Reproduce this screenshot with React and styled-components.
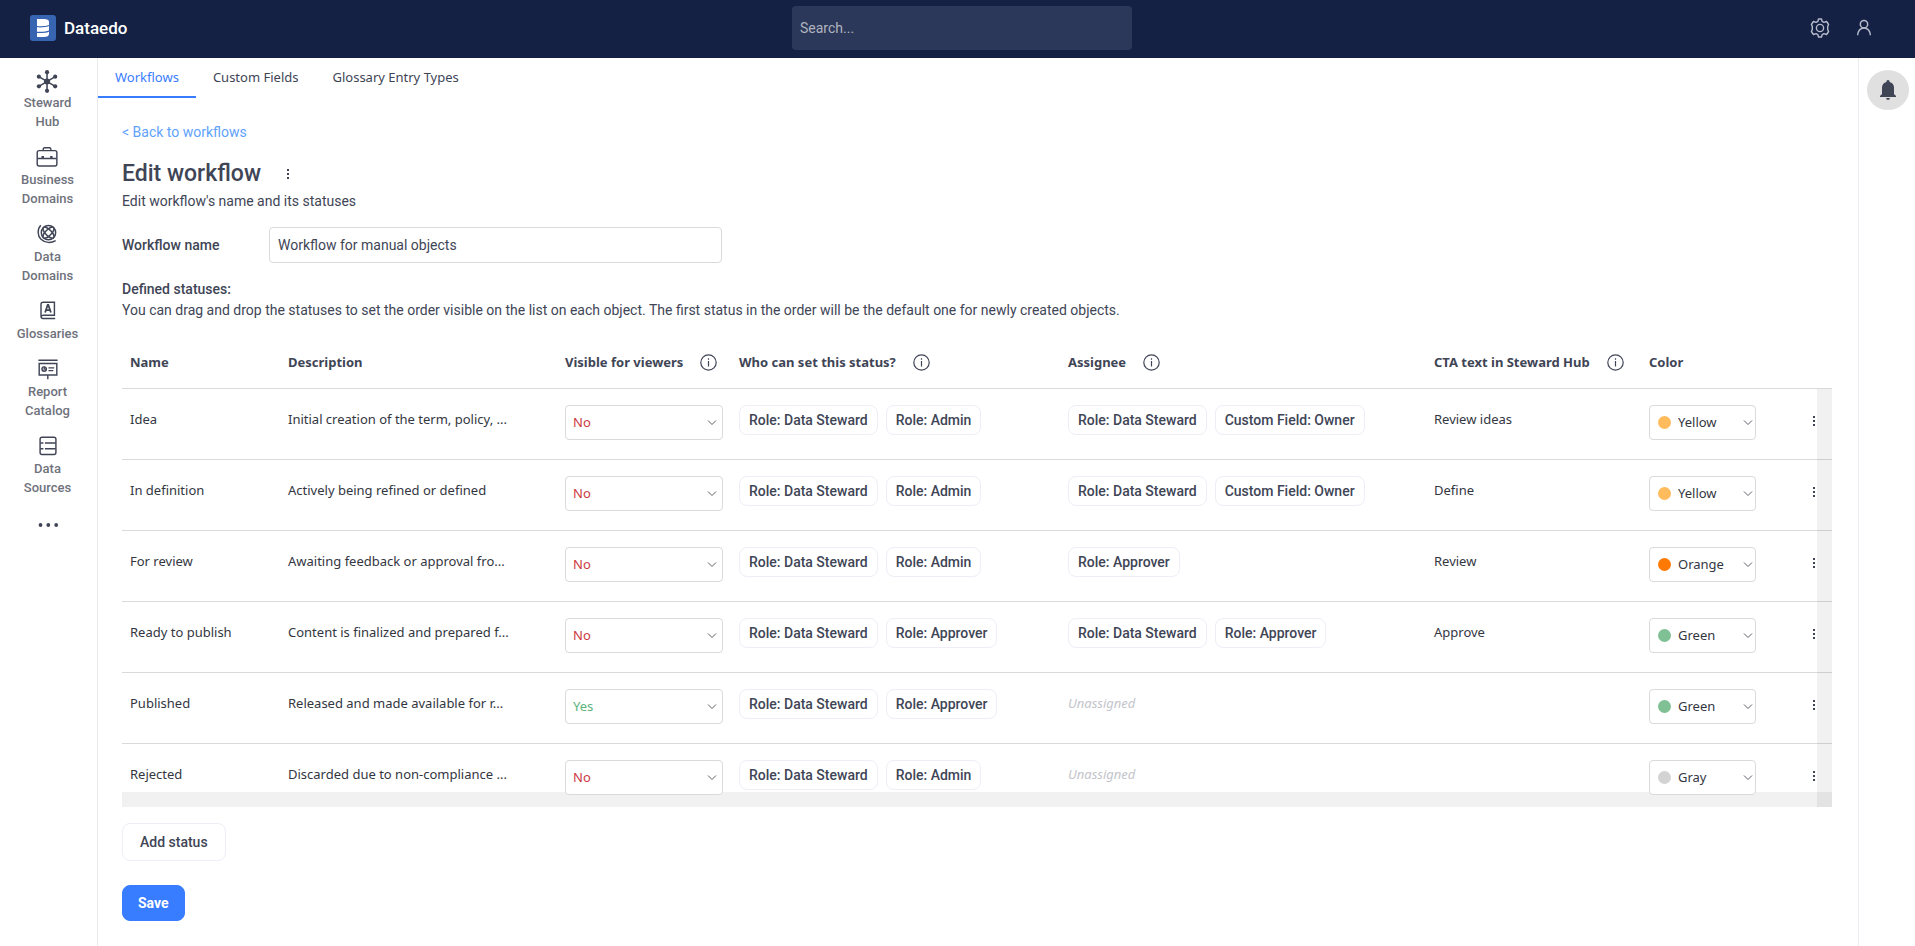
import { useState } from "react";
import styled, { createGlobalStyle, ThemeProvider } from "styled-components";

const theme = {
  navy: "#142144",
  search: "#2c385a",
  primary: "#387dff",
  link: "#60a2fb",
  text: "#404556",
  body: "#33363f",
  muted: "#6f727c",
  line: "#dadada",
  pale: "#eeeef7",
  red: "#cb3a3f",
  green: "#5db37c",
  ui: `Roboto, "Liberation Sans", sans-serif`,
  grid: `"Noto Sans", "Open Sans", sans-serif`,
};

const GlobalStyle = createGlobalStyle`
  * {
    box-sizing: border-box;
  }

  body {
    margin: 0;
    background: #fff;
    color: ${theme.text};
    font-family: ${theme.ui};
    font-size: 14px;
  }

  button, input, select {
    font: inherit;
    color: inherit;
  }

  h1, p, ul {
    margin: 0;
    padding: 0;
  }

  a {
    text-decoration: none;
  }
`;

const Page = styled.div`
  display: flex;
  flex-direction: column;
  min-height: 100vh;
`;

const Header = styled.header`
  display: grid;
  grid-template-columns: 1fr 340px 1fr;
  align-items: center;
  height: 58px;
  padding: 0 21px 2px 30px;
  background: ${(p) => p.theme.navy};
`;

const Logo = styled.a`
  display: flex;
  align-items: center;
  gap: 8px;
  color: #fff;
  font-size: 17px;
  font-weight: 500;
`;

const SearchInput = styled.input`
  width: 100%;
  height: 44px;
  padding: 0 8px;
  border: 0;
  border-radius: 4px;
  background: ${(p) => p.theme.search};
  color: #fff;

  &::placeholder {
    color: #b0b4bf;
    opacity: 1;
  }
`;

const HeaderActions = styled.div`
  display: flex;
  justify-content: flex-end;
  padding-right: 8px;
`;

const IconButton = styled.button`
  display: flex;
  align-items: center;
  justify-content: center;
  width: ${(p) => p.$width || 44}px;
  height: ${(p) => p.$height || 44}px;
  padding: 0;
  border: 0;
  border-radius: 50%;
  background: ${(p) => p.$background || "transparent"};
  color: ${(p) => p.$color || p.theme.text};
  cursor: pointer;
`;

const Body = styled.div`
  display: flex;
  flex: 1;
`;

const Sidebar = styled.nav`
  flex: 0 0 98px;
  padding: 12px 2px 0 0;
  border-right: 1px solid #ebebeb;

  ul {
    display: flex;
    flex-direction: column;
    gap: 16px;
    list-style: none;
  }
`;

const SideLink = styled.a`
  display: flex;
  flex-direction: column;
  align-items: center;
  padding: 0 12px;
  color: ${(p) => p.theme.muted};
  font-size: 13px;
  font-weight: 500;
  line-height: 19px;
  text-align: center;

  svg {
    height: 23px;
    color: ${(p) => p.theme.text};
  }
`;

const Rail = styled.aside`
  display: flex;
  justify-content: center;
  align-items: flex-start;
  flex: 0 0 57px;
  padding: 12px 0 0 2px;
  border-left: 1px solid #ebecf2;
`;

const Main = styled.main`
  flex: 1;
  min-width: 0;
`;

const Tabs = styled.nav`
  display: flex;
  height: 40px;
`;

const Tab = styled.a`
  padding: 0 17px;
  border-bottom: 2px solid ${(p) => (p.$active ? p.theme.primary : "transparent")};
  color: ${(p) => (p.$active ? p.theme.primary : p.theme.text)};
  font-family: ${(p) => p.theme.grid};
  font-size: 13px;
  line-height: 38px;
`;

const Content = styled.div`
  padding: 24px 26px 24px 24px;
`;

const BackLink = styled.a`
  display: block;
  color: ${(p) => p.theme.link};
  line-height: 20px;
`;

const TitleRow = styled.div`
  display: flex;
  align-items: center;
  gap: 15px;
  margin-top: 18px;

  h1 {
    font-size: 23px;
    font-weight: 500;
    line-height: 28px;
  }
`;

const Subtitle = styled.p`
  margin-top: 3px;
  line-height: 20px;
`;

const Field = styled.div`
  display: flex;
  align-items: center;
  margin-top: 16px;

  label {
    flex: 0 0 147px;
    font-weight: 500;
  }

  input {
    flex: 0 1 453px;
    height: 36px;
    padding: 0 8px;
    border: 1px solid ${(p) => p.theme.line};
    border-radius: 4px;
    background: #fff;
  }
`;

const Hint = styled.div`
  margin-top: 16px;
  line-height: 21px;

  strong {
    font-weight: 500;
  }
`;

const TableFrame = styled.div`
  position: relative;
  margin-top: 15px;
`;

const Track = styled.span`
  position: absolute;
  right: 0;
  bottom: 0;
  ${(p) => (p.$vertical ? "top: 53px; width: 15px;" : "left: 0; height: 15px;")}
  background: rgba(0, 0, 0, 0.055);
  pointer-events: none;
`;

const StatusTable = styled.table`
  width: 100%;
  table-layout: fixed;
  border-spacing: 0;
  font-family: ${(p) => p.theme.grid};
  font-size: 13px;
  color: ${(p) => p.theme.body};

  th {
    height: 53px;
    padding: 0 8px;
    border-bottom: 1px solid ${(p) => p.theme.line};
    color: ${(p) => p.theme.text};
    font-weight: 700;
    text-align: left;
    white-space: nowrap;
  }

  td {
    height: 71px;
    padding: 16px 8px 18px;
    border-bottom: 1px solid ${(p) => p.theme.line};
    line-height: 29px;
    vertical-align: top;
    white-space: nowrap;
  }

  tbody tr:last-child td {
    height: auto;
    padding-bottom: 12px;
    border-bottom: 0;
  }
`;

const HeadLabel = styled.span`
  display: flex;
  align-items: center;
  gap: 17px;
`;

const Chips = styled.div`
  display: flex;
  gap: 8px;
`;

const Chip = styled.span`
  height: 30px;
  padding: 0 9px;
  border: 1px solid ${(p) => p.theme.pale};
  border-radius: 8px;
  color: ${(p) => p.theme.text};
  font-family: ${(p) => p.theme.ui};
  font-size: 14px;
  font-weight: 500;
  line-height: 28px;
`;

const Unassigned = styled.em`
  color: #c3c5cb;
`;

const SelectBox = styled.div`
  position: relative;
  z-index: 1;
  height: 35px;

  select {
    display: block;
    width: 100%;
    height: 35px;
    padding: 0 20px 0 ${(p) => (p.$dot ? 28 : 7)}px;
    border: 1px solid ${(p) => p.theme.line};
    border-radius: 4px;
    background: #fff;
    color: ${(p) => p.$color || p.theme.body};
    appearance: none;
  }

  svg {
    position: absolute;
    top: 14px;
    right: ${(p) => (p.$dot ? 3 : 6)}px;
    pointer-events: none;
  }
`;

const Dot = styled.span`
  position: absolute;
  top: 11px;
  left: 9px;
  width: 13px;
  height: 13px;
  border-radius: 50%;
  background: ${(p) => p.$color};
`;

const RowMenu = styled.div`
  display: flex;
  justify-content: flex-end;
  padding-right: 2px;
`;

const Button = styled.button`
  display: block;
  height: ${(p) => (p.$primary ? 36 : 38)}px;
  margin-top: ${(p) => (p.$primary ? 24 : 16)}px;
  padding: 0 ${(p) => (p.$primary ? 15 : 17)}px;
  border: 1px solid ${(p) => (p.$primary ? p.theme.primary : p.theme.pale)};
  border-radius: 8px;
  background: ${(p) => (p.$primary ? p.theme.primary : "#fff")};
  color: ${(p) => (p.$primary ? "#fff" : p.theme.text)};
  font-weight: ${(p) => (p.$primary ? 700 : 500)};
  cursor: pointer;
`;

function Stroke({ size = 24, width = 1.5, children }) {
  return (
    <svg
      width={size}
      height={size}
      viewBox={`0 0 ${size} ${size}`}
      fill="none"
      stroke="currentColor"
      strokeWidth={width}
      aria-hidden="true"
    >
      {children}
    </svg>
  );
}

function LogoMark() {
  return (
    <svg width="26" height="26" viewBox="0 0 26 26" aria-hidden="true">
      <rect width="26" height="26" rx="3" fill="#3765b2" />
      <g fill="#fff">
        <path d="M7 4h7c3 0 5 1 5 2.500v3.500c-3 1.200-7 1.400-12 1z" />
        <path d="M7 12.300c5 .3 9 0 12-1.300v4.500c-3 1.200-7 1.500-12 1.200z" />
        <path d="M7 18c5 .3 9 0 12-1.300v2.300c0 2-2 3-5 3H7z" />
      </g>
    </svg>
  );
}

function GearIcon() {
  return (
    <Stroke size={22} width={1.4}>
      <path
        d="M9.500 2h3l.6 2.300 1.900 1.100 2.600-.9 2 3-.9 1.900v3.200l.9 1.900-2 3-2.600-.9-1.900 1.100-.6 2.300h-3l-.6-2.300L7 16.600l-2.600.9-2-3 .9-1.900V9.400l-.9-1.900 2-3 2.600.9 1.900-1.100z"
        strokeLinejoin="round"
      />
      <circle cx="11" cy="11" r="3.600" />
    </Stroke>
  );
}

function UserIcon() {
  return (
    <Stroke size={20} width={1.5}>
      <circle cx="10" cy="6.200" r="3.700" />
      <path d="M3.700 17.300c0-4.200 2.600-7.300 6.300-7.300s6.300 3.100 6.300 7.300" />
    </Stroke>
  );
}

function BellIcon() {
  return (
    <svg width="16" height="20" viewBox="0 0 16 20" fill="currentColor" aria-hidden="true">
      <path d="M6.500 2V.8Q8-.6 9.500.8V2c3 .7 4.500 3 4.500 5.500V14l2 2v1H0v-1l2-2V7.500C2 5 3.500 2.700 6.500 2z" />
      <path d="M6 18h4q-.5 2-2 2t-2-2z" />
    </svg>
  );
}

function KebabIcon() {
  return (
    <svg width="4" height="12" viewBox="0 0 4 12" fill="currentColor" aria-hidden="true">
      <rect x="1" y="1" width="2" height="2" />
      <rect x="1" y="5" width="2" height="2" />
      <rect x="1" y="9" width="2" height="2" />
    </svg>
  );
}

function ChevronIcon() {
  return (
    <svg width="10" height="8" viewBox="0 0 10 8" fill="none" stroke="#5c5f66" aria-hidden="true">
      <path d="M1 1.500l4 4 4-4" />
    </svg>
  );
}

function InfoIcon() {
  return (
    <Stroke size={17} width={1.2}>
      <circle cx="8.500" cy="8.500" r="7.700" />
      <path d="M8.500 7v5.500M8.500 4.300v1.500" />
    </Stroke>
  );
}

function StewardIcon() {
  return (
    <Stroke width={1.6}>
      <path d="M11 3v18M2.500 7l17 10M19.500 7l-17 10" />
      <g fill="currentColor" stroke="none">
        <circle cx="11" cy="12" r="3.200" />
        <circle cx="11" cy="2.300" r="2.200" />
        <circle cx="11" cy="21.700" r="2.200" />
        <circle cx="2.500" cy="7" r="2.200" />
        <circle cx="19.500" cy="7" r="2.200" />
        <circle cx="2.500" cy="17" r="2.200" />
        <circle cx="19.500" cy="17" r="2.200" />
      </g>
    </Stroke>
  );
}

function BusinessIcon() {
  return (
    <Stroke>
      <rect x="0.750" y="3.750" width="20.500" height="16" rx="2" />
      <path d="M7 3.500V2.500Q7 .8 8.500 .8h5Q15 .8 15 2.500v1M1 12h20" />
      <path d="M6.500 9.500v2M15.500 9.500v2" strokeWidth="2.500" />
    </Stroke>
  );
}

function DomainsIcon() {
  return (
    <Stroke width={1.5}>
      <circle cx="12.500" cy="9" r="7.500" />
      <g transform="rotate(45 12.500 9)">
        <ellipse cx="12.500" cy="9" rx="7.500" ry="3" />
        <ellipse cx="12.500" cy="9" rx="3" ry="7.500" />
      </g>
      <path d="M4.500 1.200C.5 5.500 1 12.200 4.700 16c4.200 4 10.600 4.100 15.300 1.300" />
    </Stroke>
  );
}

function GlossaryIcon() {
  return (
    <Stroke>
      <path d="M19.500 18.200H6.500Q4.700 18.200 4.700 16V3.500Q4.700 1.300 7 1.300h11.700v13.500H7Q4.900 14.900 4.800 16.500" />
      <path d="M9 12l2.700-8h.6L15 12M10 9.500h4" strokeWidth="1.900" />
    </Stroke>
  );
}

function ReportIcon() {
  return (
    <Stroke>
      <path d="M2 1.300h20M11.800 17v4M2.800 4.700h18.400v12H2.800z" />
      <circle cx="8" cy="10.500" r="2.300" />
      <path d="M8 8v2.500h2.500M12.500 9.200h6M12.500 12.200h5" strokeWidth="1.400" />
    </Stroke>
  );
}

function SourcesIcon() {
  return (
    <Stroke>
      <rect x="3.750" y="1.250" width="16.500" height="18" rx="2" />
      <path d="M4 7.300h3.200M8.800 7.300H20M4 13.300h3.200M8.800 13.300H20" />
    </Stroke>
  );
}

function MoreIcon() {
  return (
    <svg width="24" height="8" viewBox="0 0 24 8" fill="currentColor" aria-hidden="true">
      <circle cx="4.500" cy="4" r="1.900" />
      <circle cx="12.300" cy="4" r="1.900" />
      <circle cx="20.200" cy="4" r="1.900" />
    </svg>
  );
}

const MoreItem = styled.li`
  display: flex;
  justify-content: center;
  padding-top: 8px;
`;

const sideItems = [
  { label: "Steward Hub", Icon: StewardIcon },
  { label: "Business Domains", Icon: BusinessIcon },
  { label: "Data Domains", Icon: DomainsIcon },
  { label: "Glossaries", Icon: GlossaryIcon },
  { label: "Report Catalog", Icon: ReportIcon },
  { label: "Data Sources", Icon: SourcesIcon },
];

const tabs = ["Workflows", "Custom Fields", "Glossary Entry Types"];

const columns = [
  { label: "Name", width: 158 },
  { label: "Description", width: 277 },
  { label: "Visible for viewers", width: 174, info: true },
  { label: "Who can set this status?", width: 329, info: true },
  { label: "Assignee", width: 366, info: true },
  { label: "CTA text in Steward Hub", width: 215, info: true },
  { label: "Color", width: 123 },
  { label: "", width: 68 },
];

const colors = {
  Yellow: "#ffbb5c",
  Orange: "#ff7a05",
  Green: "#7fc194",
  Gray: "#d3d3d3",
};

const initialStatuses = [
  {
    name: "Idea",
    description: "Initial creation of the term, policy, ...",
    visible: "No",
    setters: ["Role: Data Steward", "Role: Admin"],
    assignees: ["Role: Data Steward", "Custom Field: Owner"],
    cta: "Review ideas",
    color: "Yellow",
  },
  {
    name: "In definition",
    description: "Actively being refined or defined",
    visible: "No",
    setters: ["Role: Data Steward", "Role: Admin"],
    assignees: ["Role: Data Steward", "Custom Field: Owner"],
    cta: "Define",
    color: "Yellow",
  },
  {
    name: "For review",
    description: "Awaiting feedback or approval fro...",
    visible: "No",
    setters: ["Role: Data Steward", "Role: Admin"],
    assignees: ["Role: Approver"],
    cta: "Review",
    color: "Orange",
  },
  {
    name: "Ready to publish",
    description: "Content is finalized and prepared f...",
    visible: "No",
    setters: ["Role: Data Steward", "Role: Approver"],
    assignees: ["Role: Data Steward", "Role: Approver"],
    cta: "Approve",
    color: "Green",
  },
  {
    name: "Published",
    description: "Released and made available for r...",
    visible: "Yes",
    setters: ["Role: Data Steward", "Role: Approver"],
    assignees: [],
    cta: "",
    color: "Green",
  },
  {
    name: "Rejected",
    description: "Discarded due to non-compliance ...",
    visible: "No",
    setters: ["Role: Data Steward", "Role: Admin"],
    assignees: [],
    cta: "",
    color: "Gray",
  },
];

function ChipList({ items }) {
  return (
    <Chips>
      {items.map((item) => (
        <Chip key={item}>{item}</Chip>
      ))}
    </Chips>
  );
}

function StatusRow({ status, onChange }) {
  return (
    <tr>
      <td>{status.name}</td>
      <td>{status.description}</td>
      <td>
        <SelectBox $color={status.visible === "Yes" ? theme.green : theme.red}>
          <select
            aria-label={`${status.name} visible for viewers`}
            value={status.visible}
            onChange={(e) => onChange({ visible: e.target.value })}
          >
            <option>No</option>
            <option>Yes</option>
          </select>
          <ChevronIcon />
        </SelectBox>
      </td>
      <td>
        <ChipList items={status.setters} />
      </td>
      <td>
        {status.assignees.length ? (
          <ChipList items={status.assignees} />
        ) : (
          <Unassigned>Unassigned</Unassigned>
        )}
      </td>
      <td>{status.cta}</td>
      <td>
        <SelectBox $dot>
          <select
            aria-label={`${status.name} color`}
            value={status.color}
            onChange={(e) => onChange({ color: e.target.value })}
          >
            {Object.keys(colors).map((color) => (
              <option key={color}>{color}</option>
            ))}
          </select>
          <Dot $color={colors[status.color]} />
          <ChevronIcon />
        </SelectBox>
      </td>
      <td>
        <RowMenu>
          <IconButton $width={16} $height={32} aria-label={`${status.name} menu`}>
            <KebabIcon />
          </IconButton>
        </RowMenu>
      </td>
    </tr>
  );
}

export default function App() {
  const [activeTab, setActiveTab] = useState("Workflows");
  const [name, setName] = useState("Workflow for manual objects");
  const [statuses, setStatuses] = useState(initialStatuses);

  const updateStatus = (index, patch) => {
    setStatuses(statuses.map((s, i) => (i === index ? { ...s, ...patch } : s)));
  };

  return (
    <ThemeProvider theme={theme}>
      <GlobalStyle />
      <Page>
        <Header>
          <Logo href="#home">
            <LogoMark />
            Dataedo
          </Logo>
          <SearchInput type="text" placeholder="Search..." aria-label="Search" />
          <HeaderActions>
            <IconButton $color="#b4bac8" aria-label="Settings">
              <GearIcon />
            </IconButton>
            <IconButton $color="#b4bac8" aria-label="Account">
              <UserIcon />
            </IconButton>
          </HeaderActions>
        </Header>
        <Body>
          <Sidebar>
            <ul>
              {sideItems.map(({ label, Icon }) => (
                <li key={label}>
                  <SideLink href="#menu">
                    <Icon />
                    {label}
                  </SideLink>
                </li>
              ))}
              <MoreItem>
                <IconButton $width={24} $height={8} aria-label="More">
                  <MoreIcon />
                </IconButton>
              </MoreItem>
            </ul>
          </Sidebar>
          <Main>
            <Tabs>
              {tabs.map((tab) => (
                <Tab
                  key={tab}
                  href="#tab"
                  $active={tab === activeTab}
                  onClick={() => setActiveTab(tab)}
                >
                  {tab}
                </Tab>
              ))}
            </Tabs>
            <Content>
              <BackLink href="#workflows">&lt; Back to workflows</BackLink>
              <TitleRow>
                <h1>Edit workflow</h1>
                <IconButton $width={24} $height={24} aria-label="Workflow menu">
                  <KebabIcon />
                </IconButton>
              </TitleRow>
              <Subtitle>Edit workflow's name and its statuses</Subtitle>
              <Field>
                <label htmlFor="workflow-name">Workflow name</label>
                <input
                  id="workflow-name"
                  type="text"
                  value={name}
                  onChange={(e) => setName(e.target.value)}
                />
              </Field>
              <Hint>
                <strong>Defined statuses:</strong>
                <p>
                  You can drag and drop the statuses to set the order visible on the list on each
                  object. The first status in the order will be the default one for newly created
                  objects.
                </p>
              </Hint>
              <TableFrame>
                <StatusTable>
                  <colgroup>
                    {columns.map((column) => (
                      <col key={column.label} width={column.width} />
                    ))}
                  </colgroup>
                  <thead>
                    <tr>
                      {columns.map((column) => (
                        <th key={column.label}>
                          <HeadLabel>
                            {column.label}
                            {column.info && <InfoIcon />}
                          </HeadLabel>
                        </th>
                      ))}
                    </tr>
                  </thead>
                  <tbody>
                    {statuses.map((status, index) => (
                      <StatusRow
                        key={status.name}
                        status={status}
                        onChange={(patch) => updateStatus(index, patch)}
                      />
                    ))}
                  </tbody>
                </StatusTable>
                <Track $vertical />
                <Track />
              </TableFrame>
              <Button>Add status</Button>
              <Button $primary>Save</Button>
            </Content>
          </Main>
          <Rail>
            <IconButton $width={42} $height={40} $background="#e0e0e0" aria-label="Notifications">
              <BellIcon />
            </IconButton>
          </Rail>
        </Body>
      </Page>
    </ThemeProvider>
  );
}
